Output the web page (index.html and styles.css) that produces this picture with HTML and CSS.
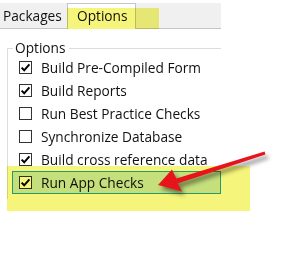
FILE: index.html
```html
<!DOCTYPE html>
<html lang="en">
<head>
    <meta charset="UTF-8">
    <title>Options</title>
    <link rel="stylesheet" href="styles.css">
</head>
<body>
    <div class="tabs">
        <div class="tab">Packages</div>
        <div class="tab active">Options</div>
    </div>

    <fieldset class="group">
        <legend>Options</legend>
        <div class="row"><span class="box checked"></span>Build Pre-Compiled Form</div>
        <div class="row"><span class="box checked"></span>Build Reports</div>
        <div class="row"><span class="box"></span>Run Best Practice Checks</div>
        <div class="row"><span class="box"></span>Synchronize Database</div>
        <div class="row"><span class="box checked"></span>Build cross reference data</div>
        <div class="row marked"><span class="box checked"></span>Run App Checks</div>
    </fieldset>

    <!-- marker highlights and arrow drawn over the screenshot -->
    <div class="marker marker-tab"></div>
    <div class="marker marker-row"></div>
    <svg class="arrow" width="282" height="260" viewBox="0 0 282 260">
        <polygon points="264.6,151.4 176.3,178.4 172,169.5 158,185 182,191.5 177.7,183.6 265.4,154.6" fill="#e8141b"/>
    </svg>
</body>
</html>
```

FILE: styles.css
```css
body {
    margin: 0;
    background: #fff;
    font-family: "Open Sans", "Noto Sans", sans-serif;
    font-size: 13.7px;
    color: #111;
    position: relative;
    width: 282px;
    height: 260px;
    overflow: hidden;
}
.tabs {
    display: flex;
    align-items: flex-end;
    width: 221px;
    height: 25px;
    margin-top: 3px;
    background: #f0f0f0;
    border-bottom: 1px solid #c4c4c4;
}
.tab {
    height: 22px;
    line-height: 20px;
    padding: 0 2px 0 3px;
    width: 62px;
    white-space: nowrap;
}
.tab.active {
    width: 69px;
    box-sizing: border-box;
    height: 26px;
    line-height: 24px;
    margin-bottom: -1px;
    padding: 0 0 0 9px;
    background: #fff;
    border: 1px solid #c4c4c4;
    border-bottom: none;
}
.group {
    box-sizing: border-box;
    width: 214px;
    margin: 11px 0 0 7px;
    padding: 0 0 5px 0;
    border: none;
    border-top: 1px solid #dcdcdc;
    border-left: 1px solid #dcdcdc;
}
.group legend {
    margin-left: 5px;
    padding: 0 3px 0 2px;
    line-height: 16px;
}
.row {
    display: flex;
    align-items: center;
    gap: 9px;
    height: 23px;
    padding-left: 11px;
    white-space: nowrap;
}
.row.marked {
    box-sizing: border-box;
    margin-left: 4px;
    padding-left: 6px;
    background: #cce8ff;
    border: 1px solid #26a0da;
}
.box {
    box-sizing: border-box;
    width: 13px;
    height: 13px;
    border: 1px solid #333;
    background: #fff center / 11px 11px no-repeat;
    flex: none;
}
.box.checked {
    background-image: url("data:image/svg+xml,%3Csvg xmlns='http://www.w3.org/2000/svg' viewBox='0 0 11 11'%3E%3Cpath d='M1.6 5.6 L4.2 8.3 L9.4 2.4' fill='none' stroke='%23000' stroke-width='2'/%3E%3C/svg%3E");
}
.marker {
    position: absolute;
    background: #f5f57c;
    mix-blend-mode: multiply;
}
.marker-tab {
    left: 67px;
    top: 8px;
    width: 92px;
    height: 21px;
}
.marker-row {
    left: 7px;
    top: 166px;
    width: 243px;
    height: 45px;
}
.arrow {
    position: absolute;
    left: 0;
    top: 0;
    filter: drop-shadow(3px 4px 2px rgba(0, 0, 0, 0.45));
}
```
